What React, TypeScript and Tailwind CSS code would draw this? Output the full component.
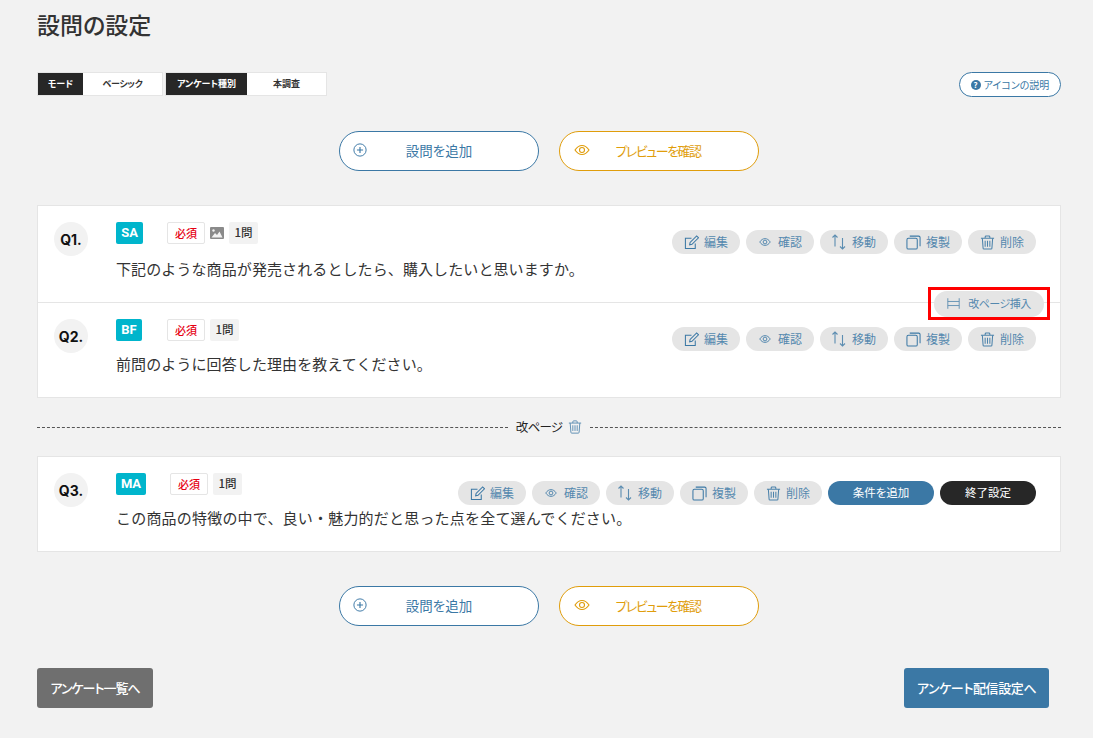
import React from "react";

const font = { fontFamily: '"Noto Sans CJK JP", "Noto Sans", sans-serif', fontFeatureSettings: '"palt"' } as React.CSSProperties;

const Svg = ({ children, className }: { children: React.ReactNode; className: string }) => (
  <svg viewBox="0 0 16 16" fill="none" stroke="currentColor" strokeWidth="1.1" className={className}>
    {children}
  </svg>
);
const EditIcon = () => (
  <Svg className="w-[15px] h-[15px]">
    <path d="M12 9v5.500H1.500V3.500h6.500" />
    <path d="M6 10.500l.5-2.500 7-7 2 2-7 7z" />
  </Svg>
);
const EyeIcon = ({ className = "w-[12px] h-[12px]" }: { className?: string }) => (
  <Svg className={className}>
    <path d="M1 8c2-3 4.300-4.500 7-4.500S13 5 15 8c-2 3-4.300 4.500-7 4.500S3 11 1 8z" />
    <circle cx="8" cy="8" r="2.500" />
  </Svg>
);
const MoveIcon = () => (
  <svg viewBox="0 0 16 16" fill="none" stroke="currentColor" strokeWidth="1.1" className="w-[16px] h-[16px] shrink-0 opacity-80">
    <path d="M4 12.500V1M1.500 3.500L4 1l2.500 2.500" />
    <path d="M11.500 4v11M9 12.500l2.500 2.500 2.500-2.500" />
  </svg>
);
const CopyIcon = () => (
  <Svg className="w-[15px] h-[15px]">
    <rect x="1" y="3.500" width="11" height="11.500" rx="1.500" />
    <path d="M4 1.200h9.500A1.500 1.500 0 0115 2.700V12" />
  </Svg>
);
const TrashIcon = ({ className = "w-[15px] h-[15px] opacity-90" }: { className?: string }) => (
  <Svg className={className}>
    <path d="M1 3.500h14M5.500 3.500V2a1 1 0 011-1h3a1 1 0 011 1v1.500" />
    <path d="M2.500 3.500l.8 10.500a1 1 0 001 1h7.400a1 1 0 001-1l.8-10.500" />
    <path d="M5.500 6v6.500M8 6v6.500M10.500 6v6.500" />
  </Svg>
);
const PlusCircle = () => (
  <Svg className="w-[14px] h-[14px]">
    <circle cx="8" cy="8" r="7" />
    <path d="M8 4.500v7M4.500 8h7" strokeWidth="1.300" />
  </Svg>
);
const BreakIcon = () => (
  <Svg className="w-[13px] h-[13px] opacity-80">
    <path d="M1 1.500v13M15 1.500v13M1 5.500h14M1 10.500h14" />
  </Svg>
);
const ImageIcon = () => (
  <svg viewBox="0 0 14 12" className="w-[14px] h-[12px] text-[#8a8a8a]">
    <rect width="14" height="12" rx="1" fill="currentColor" />
    <circle cx="3.500" cy="3.500" r="1.200" fill="#f2f2f2" />
    <path d="M1.500 10.500L5 6l2 2 2.500-3.500 3 6z" fill="#f2f2f2" />
  </svg>
);

const Action = ({ icon, label }: { icon: React.ReactNode; label: string }) => (
  <span className="flex items-center justify-center gap-[5px] w-[68px] h-[24px] rounded-full bg-[#e5e5e5] text-[#3b78a5] text-[12px]">
    <span className="flex w-[15px] justify-center">{icon}</span>
    <span className="opacity-85">{label}</span>
  </span>
);

const Actions = () => (
  <>
    <Action icon={<EditIcon />} label="編集" />
    <Action icon={<EyeIcon />} label="確認" />
    <Action icon={<MoveIcon />} label="移動" />
    <Action icon={<CopyIcon />} label="複製" />
    <Action icon={<TrashIcon />} label="削除" />
  </>
);

const Question = ({
  q, type, typeW, gap, text, image, extra, textMt, h, border, spacing = "tracking-[0.1px]",
}: {
  q: string; type: string; typeW: string; gap: string; text: string; image?: boolean;
  extra?: React.ReactNode; textMt: string; h: string; border?: boolean; spacing?: string;
}) => (
  <div className={`flex pl-[16px] pr-[24px] pt-[16px] ${h} ${border ? "border-b border-[#e5e5e5]" : ""}`}>
    <div className="w-[34px] h-[34px] shrink-0 rounded-full bg-[#f2f2f2] flex items-center justify-center text-[14px] font-bold text-[#111111]" style={{ fontFamily: "Inter, sans-serif" }}>
      {q}
    </div>
    <div className="ml-[28px] flex-1 min-w-0">
      <div className="flex justify-between items-start">
        <div className="flex items-center">
          <span className={`${typeW} ${gap} h-[22px] rounded-[2px] bg-[#00b5cc] text-white text-[13px] font-bold flex items-center justify-center`} style={{ fontFamily: "Roboto, sans-serif" }}>
            {type}
          </span>
          <span className="w-[38px] h-[22px] border border-[#e5e5e5] rounded-[2px] bg-white text-[#e60012] text-[11px] font-medium flex items-center justify-center">必須</span>
          {image && <span className="ml-[5px]"><ImageIcon /></span>}
          <span className="ml-[5px] w-[29px] h-[22px] rounded-[2px] bg-[#f2f2f2] text-[#333333] text-[11.500px] font-medium flex items-center justify-center">1問</span>
        </div>
        <div className="flex gap-[6px] mt-[8px]">{extra ?? <Actions />}</div>
      </div>
      <p className={`${textMt} ${spacing} text-[15px] leading-[24px] text-[#333333]`} style={{ fontFeatureSettings: "normal" }}>{text}</p>
    </div>
  </div>
);

const TopButtons = ({ className }: { className: string }) => (
  <div className={`flex justify-center gap-[20px] ${className}`}>
    <span className="relative w-[200px] h-[40px] pb-[2px] rounded-full border border-[#3b78a5] bg-white text-[#3b78a5] text-[13.500px] flex items-center justify-center">
      <span className="absolute left-[13px] top-[11px] flex"><PlusCircle /></span>
      設問を追加
    </span>
    <span className="relative w-[200px] h-[40px] pb-[1px] pr-[2px] rounded-full border border-[#e09d0b] bg-white text-[#e09d0b] text-[13px] tracking-[-1.500px] flex items-center justify-center">
      <span className="absolute left-[14px] top-[10px] flex"><EyeIcon className="w-[16px] h-[16px]" /></span>
      プレビューを確認
    </span>
  </div>
);

export default function App() {
  return (
    <div className="w-[1093px] h-[738px] overflow-hidden bg-[#f2f2f2] pl-[37px] pr-[32px] pt-[7px]" style={font}>
      <h1 className="text-[23px] leading-[34px] font-medium text-[#333333]">設問の設定</h1>

      <div className="mt-[31px] flex items-start justify-between">
        <div className="flex gap-[2px] text-[9px] font-bold">
          <div className="flex border border-[#e5e5e5] h-[24px] bg-white">
            <span className="w-[45px] bg-[#272727] text-white flex items-center justify-center">モード</span>
            <span className="w-[79px] text-[#333333] flex items-center justify-center tracking-[-0.3px]">ベーシック</span>
          </div>
          <div className="flex border border-[#e5e5e5] h-[24px] bg-white">
            <span className="w-[81px] bg-[#272727] text-white flex items-center justify-center">アンケート種別</span>
            <span className="w-[79px] text-[#333333] flex items-center justify-center">本調査</span>
          </div>
        </div>
        <span className="w-[102px] h-[25px] rounded-full border border-[#3b78a5] bg-white text-[#3b78a5] text-[10px] flex items-center justify-center gap-[3px]">
          <span className="w-[10px] h-[10px] rounded-full bg-[#3b78a5] text-white text-[8px] font-bold flex items-center justify-center">?</span>
          アイコンの説明
        </span>
      </div>

      <TopButtons className="mt-[34px]" />

      <div className="relative mt-[34px] border border-[#e5e5e5] bg-white">
        <Question q="Q1." type="SA" typeW="w-[27px]" gap="mr-[24px]" image text="下記のような商品が発売されるとしたら、購入したいと思いますか。" textMt="mt-[3px]" h="h-[97px]" border />
        <Question q="Q2." type="BF" typeW="w-[26px]" gap="mr-[25px]" text="前問のように回答した理由を教えてください。" textMt="mt-[1px]" h="h-[94px]" />
        <div className="absolute left-[890px] top-[81px] w-[122px] h-[33px] border-[3px] border-[#ff0000] flex items-center justify-center">
          <span className="flex items-center justify-center gap-[8px] w-[110px] h-[26px] rounded-full bg-[#e5e5e5] text-[#3b78a5] text-[11px] tracking-[-0.5px]">
            <BreakIcon />
            <span className="opacity-85">改ページ挿入</span>
          </span>
        </div>
      </div>

      <div className="flex items-center mt-[20px] h-[18px]">
        <div className="flex-1 border-t border-dashed border-[#555555]" />
        <span className="mx-[8px] flex items-center gap-[6px] text-[12.500px] tracking-[-0.8px] text-[#222222]">
          改ページ
          <span className="text-[#3b78a5] opacity-80 flex"><TrashIcon className="w-[14px] h-[14px]" /></span>
        </span>
        <div className="flex-1 border-t border-dashed border-[#555555]" />
      </div>

      <div className="mt-[20px] border border-[#e5e5e5] bg-white">
        <Question
          q="Q3." type="MA" typeW="w-[30px]" gap="mr-[24px]"
          text="この商品の特徴の中で、良い・魅力的だと思った点を全て選んでください。"
          textMt="mt-[1px]" h="h-[94px]" spacing="tracking-[0.2px]"
          extra={
            <>
              <Actions />
              <span className="w-[106px] h-[24px] rounded-full bg-[#3b78a5] text-white text-[11.500px] flex items-center justify-center">条件を追加</span>
              <span className="w-[96px] h-[24px] rounded-full bg-[#272727] text-white text-[11.500px] flex items-center justify-center">終了設定</span>
            </>
          }
        />
      </div>

      <TopButtons className="mt-[34px]" />

      <div className="mt-[42px] flex justify-between pr-[12px]">
        <span className="w-[116px] h-[40px] rounded-[3px] bg-[#6f6f6f] text-white text-[13px] tracking-[-1px] font-medium flex items-center justify-center">アンケート一覧へ</span>
        <span className="w-[145px] h-[40px] rounded-[3px] bg-[#3b78a5] text-white text-[13px] tracking-[-0.400px] font-medium flex items-center justify-center">アンケート配信設定へ</span>
      </div>
    </div>
  );
}
